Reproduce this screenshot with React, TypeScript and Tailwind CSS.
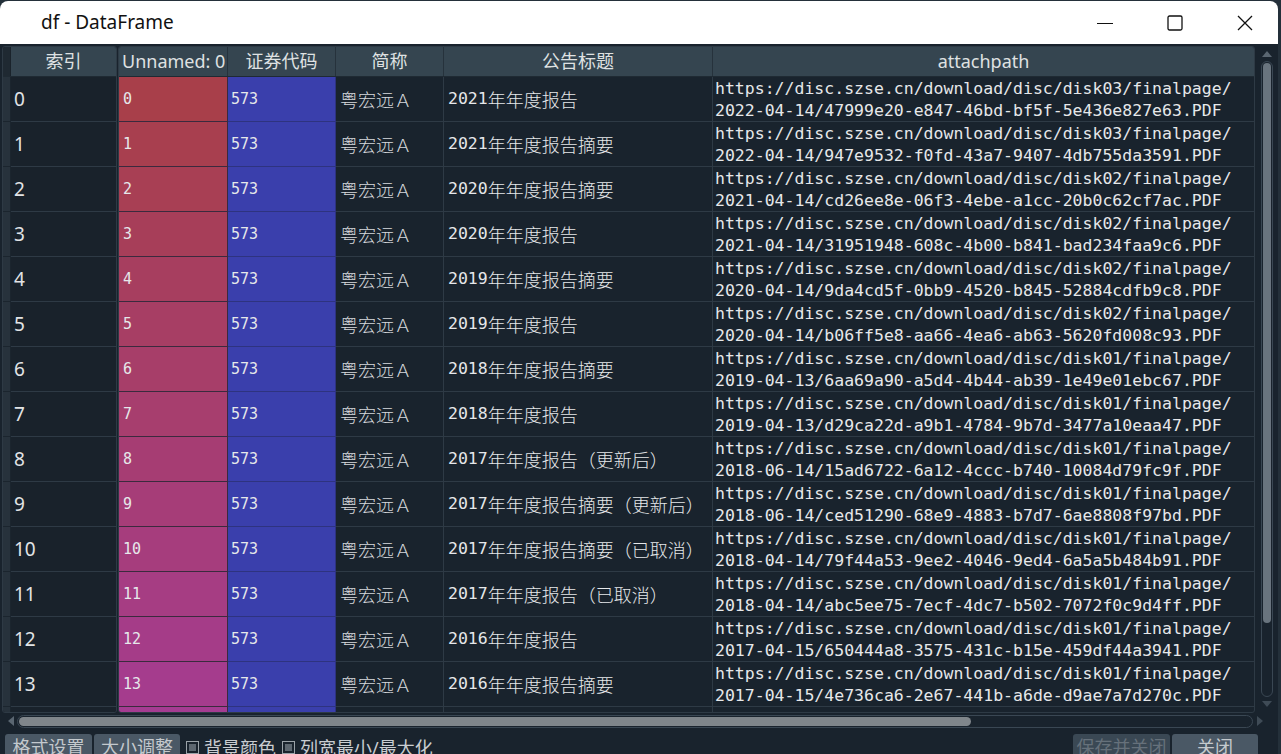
import React from "react";

const rows = [
  ["2021年年度报告", "disk03", "2022-04-14/47999e20-e847-46bd-bf5f-5e436e827e63.PDF"],
  ["2021年年度报告摘要", "disk03", "2022-04-14/947e9532-f0fd-43a7-9407-4db755da3591.PDF"],
  ["2020年年度报告摘要", "disk02", "2021-04-14/cd26ee8e-06f3-4ebe-a1cc-20b0c62cf7ac.PDF"],
  ["2020年年度报告", "disk02", "2021-04-14/31951948-608c-4b00-b841-bad234faa9c6.PDF"],
  ["2019年年度报告摘要", "disk02", "2020-04-14/9da4cd5f-0bb9-4520-b845-52884cdfb9c8.PDF"],
  ["2019年年度报告", "disk02", "2020-04-14/b06ff5e8-aa66-4ea6-ab63-5620fd008c93.PDF"],
  ["2018年年度报告摘要", "disk01", "2019-04-13/6aa69a90-a5d4-4b44-ab39-1e49e01ebc67.PDF"],
  ["2018年年度报告", "disk01", "2019-04-13/d29ca22d-a9b1-4784-9b7d-3477a10eaa47.PDF"],
  ["2017年年度报告（更新后）", "disk01", "2018-06-14/15ad6722-6a12-4ccc-b740-10084d79fc9f.PDF"],
  ["2017年年度报告摘要（更新后）", "disk01", "2018-06-14/ced51290-68e9-4883-b7d7-6ae8808f97bd.PDF"],
  ["2017年年度报告摘要（已取消）", "disk01", "2018-04-14/79f44a53-9ee2-4046-9ed4-6a5a5b484b91.PDF"],
  ["2017年年度报告（已取消）", "disk01", "2018-04-14/abc5ee75-7ecf-4dc7-b502-7072f0c9d4ff.PDF"],
  ["2016年年度报告", "disk01", "2017-04-15/650444a8-3575-431c-b15e-459df44a3941.PDF"],
  ["2016年年度报告摘要", "disk01", "2017-04-15/4e736ca6-2e67-441b-a6de-d9ae7a7d270c.PDF"],
];

// background of the "Unnamed: 0" column, red -> magenta
const unnamedColor = (i: number) => {
  const t = i / 14;
  const r = Math.round(168 - 3 * t);
  const g = Math.round(63 - 3 * t);
  const b = Math.round(74 + 72 * t);
  return `rgb(${r},${g},${b})`;
};

const sans = "font-['Noto_Sans','Noto_Sans_CJK_SC',sans-serif]";
const mono = "font-['DejaVu_Sans_Mono','Noto_Sans_CJK_SC',monospace]";
const cjk = "font-['Noto_Sans_CJK_SC',sans-serif] text-[18px] font-light";

const Checkbox = ({ label }: { label: string }) => (
  <div className="flex items-center gap-[5px] text-[#c9cdd1] text-[18px] leading-none ml-[6px]">
    <div className="w-[13px] h-[13px] border border-[#9aa2a8] p-[2px]">
      <div className="w-full h-full bg-[#5d6770]" />
    </div>
    <span>{label}</span>
  </div>
);

const Button = ({ label, w, disabled }: { label: string; w: string; disabled?: boolean }) => (
  <div
    className={`${w} h-[26px] rounded-t-[3px] flex justify-center pt-[2px] text-[18px] leading-[22px] ${
      disabled ? "bg-[#3a4854] text-[#66717b]" : "bg-[#4a5865] text-[#c4c9cd]"
    }`}
  >
    {label}
  </div>
);

export default function App() {
  return (
    <div className={`w-[1281px] h-[754px] bg-[#24303a] overflow-hidden ${sans}`}>
      <div className="w-[1278px] h-[760px] mt-px flex flex-col rounded-t-[8px] overflow-hidden bg-[#19232d]">
        {/* Title bar */}
        <div className="h-[43px] bg-white flex items-center shrink-0">
          <span className="ml-[41px] text-[19px] text-[#111] leading-none">df - DataFrame</span>
          <div className="ml-auto flex items-center h-full">
            <div className="w-[70px] h-full flex items-center justify-center">
              <svg width="16" height="16" viewBox="0 0 16 16"><path d="M0 8.5h16" stroke="#111" strokeWidth="1.2" /></svg>
            </div>
            <div className="w-[70px] h-full flex items-center justify-center">
              <svg width="16" height="16" viewBox="0 0 16 16"><rect x="1" y="1" width="14" height="14" rx="1.5" fill="none" stroke="#111" strokeWidth="1.3" /></svg>
            </div>
            <div className="w-[70px] h-full flex items-center justify-center mr-[-2px]">
              <svg width="16" height="16" viewBox="0 0 16 16"><path d="M1 1l14 14M15 1L1 15" stroke="#111" strokeWidth="1.3" /></svg>
            </div>
          </div>
        </div>

        {/* Table area */}
        <div className="h-[669px] flex pt-[2px] shrink-0">
          {/* Index table */}
          <div className="w-[115px] ml-[2px] border border-[#2e3a45] rounded-[3px] overflow-hidden flex flex-col">
            <div className="h-[30px] flex shrink-0 border-b border-[#1f2a33]">
              <div className="w-[8px] bg-[#1f2932] border-r border-[#1a232b]" />
              <div className="flex-1 bg-[#354550] flex items-center justify-center text-[18px] text-[#dfe1e2]">索引</div>
            </div>
            {rows.map((_, i) => (
              <div key={i} className="h-[45px] flex shrink-0">
                <div className="w-[8px] bg-[#27323c] border-r border-b border-[#1b252e]" />
                <div className="flex-1 bg-[#19222b] border-b border-[#2e3a45] flex items-center pl-[3px] pt-[1px] text-[19px] text-[#e2e4e6]">
                  {i}
                </div>
              </div>
            ))}
            <div className="h-[45px] flex shrink-0">
              <div className="w-[8px] bg-[#27323c] border-r border-[#1b252e]" />
              <div className="flex-1 bg-[#19222b]" />
            </div>
          </div>

          {/* Data table */}
          <div className="w-[1137px] ml-[1px] border border-[#2e3a45] rounded-[3px] overflow-hidden flex flex-col">
            <div className="h-[30px] flex shrink-0 bg-[#354550] text-[18px] text-[#dfe1e2] border-b border-[#1f2a33]">
              <div className="w-[109px] border-r border-[#26323c] flex items-center overflow-hidden whitespace-nowrap pl-[3px] text-[18px]">Unnamed: 0</div>
              <div className="w-[108px] border-r border-[#26323c] flex items-center justify-center">证券代码</div>
              <div className="w-[108px] border-r border-[#26323c] flex items-center justify-center">简称</div>
              <div className="w-[269px] border-r border-[#26323c] flex items-center justify-center">公告标题</div>
              <div className="w-[541px] flex items-center justify-center">attachpath</div>
            </div>
            {rows.map(([title, disk, path], i) => (
              <div key={i} className={`h-[45px] flex shrink-0 text-[16.5px] text-[#e6e8ea] ${mono}`}>
                <div
                  className="w-[109px] border-r border-b border-[#3b2a3e] flex items-center pl-[4px] pt-[1px] text-[15px]"
                  style={{ backgroundColor: unnamedColor(i) }}
                >
                  {i}
                </div>
                <div className="w-[108px] bg-[#3a3fac] border-r border-b border-[#2e3380] flex items-center pl-[3px] pt-[1px] text-[15px]">573</div>
                <div className={`w-[108px] border-r border-b border-[#2e3a45] flex items-center pl-[4px] pt-[1px] text-[#d7dadd] ${cjk}`}>粤宏远Ａ</div>
                <div className="w-[269px] border-r border-b border-[#2e3a45] flex items-center pl-[4px] pt-[1px] whitespace-nowrap overflow-hidden">
                  <span>{title.slice(0, 4)}</span>
                  <span className={cjk}>{title.slice(4)}</span>
                </div>
                <div className="w-[541px] border-b border-[#2e3a45] flex flex-col justify-center pl-[2px] pt-[1px] leading-[22px] whitespace-nowrap overflow-hidden">
                  <span>{`https://disc.szse.cn/download/disc/${disk}/finalpage/`}</span>
                  <span>{path}</span>
                </div>
              </div>
            ))}
            {/* partially visible next row */}
            <div className="h-[45px] flex shrink-0">
              <div className="w-[109px] border-r border-[#3b2a3e]" style={{ backgroundColor: unnamedColor(14) }} />
              <div className="w-[108px] bg-[#3a3fac] border-r border-[#2e3380]" />
              <div className="w-[108px] border-r border-[#2e3a45]" />
              <div className="w-[269px] border-r border-[#2e3a45]" />
              <div className="w-[541px]" />
            </div>
          </div>

          {/* Vertical scrollbar */}
          <div className="w-[22px] flex flex-col items-center pt-[4px] ml-[1px]">
            <svg width="12" height="8" viewBox="0 0 12 8"><path d="M1 7L6 1l5 6z" fill="#5a6671" /></svg>
            <div className="mt-[3px] w-[12px] h-[636px] border border-[#3a4753] rounded-full p-[1px] flex flex-col">
              <div className="h-[560px] bg-[#69747e] rounded-full" />
            </div>
            <svg className="mt-[3px]" width="12" height="8" viewBox="0 0 12 8"><path d="M1 1h10L6 7z" fill="#3f4b56" /></svg>
          </div>
        </div>

        {/* Horizontal scrollbar */}
        <div className="h-[16px] flex items-center shrink-0 pl-[7px]">
          <svg width="8" height="12" viewBox="0 0 8 12"><path d="M7 1L1 6l6 5z" fill="#5a6671" /></svg>
          <div className="ml-[2px] w-[1236px] h-[13px] border border-[#3a4753] rounded-full p-[1px] flex">
            <div className="w-[952px] bg-[#80868b] rounded-full" />
          </div>
          <svg className="ml-[3px]" width="8" height="12" viewBox="0 0 8 12"><path d="M1 1l6 5-6 5z" fill="#3f4b56" /></svg>
        </div>

        {/* Bottom bar */}
        <div className="flex pl-[5px] pr-[20px] pt-[5px] shrink-0">
          <div className="flex items-start">
            <Button label="格式设置" w="w-[87px]" />
            <div className="ml-[2px]">
              <Button label="大小调整" w="w-[86px]" />
            </div>
            <div className="flex items-center h-[24px] pt-[3px]">
              <Checkbox label="背景颜色" />
              <Checkbox label="列宽最小/最大化" />
            </div>
          </div>
          <div className="ml-auto flex items-start gap-[2px]">
            <Button label="保存并关闭" w="w-[97px]" disabled />
            <Button label="关闭" w="w-[86px]" />
          </div>
        </div>
      </div>
    </div>
  );
}
